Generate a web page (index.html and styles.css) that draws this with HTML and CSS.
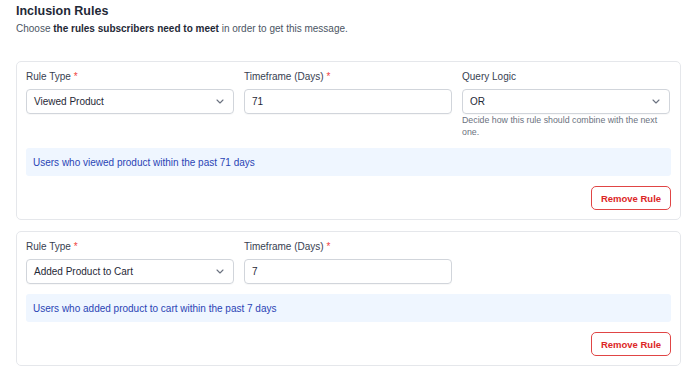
FILE: index.html
```html
<!DOCTYPE html>
<html lang="en">

<head>
  <meta charset="UTF-8">
  <meta name="viewport" content="width=device-width, initial-scale=1.0">
  <title>Inclusion Rules</title>
  <link rel="stylesheet" href="styles.css">
</head>

<body>
  <section class="rules-section">
    <h2 class="rules-title">Inclusion Rules</h2>
    <p class="rules-intro">Choose <strong>the rules subscribers need to meet</strong> in order to get this message.</p>

    <div class="rule-card">
      <div class="rule-fields">
        <div class="field">
          <label class="field-label">Rule Type <span class="req">*</span></label>
          <div class="select-box">
            <span>Viewed Product</span>
            <svg class="chevron" width="8" height="5" viewBox="0 0 8 5"><path d="M1 1l3 3 3-3" fill="none" stroke="#6b7280" stroke-width="1.1" stroke-linecap="round" stroke-linejoin="round"/></svg>
          </div>
        </div>
        <div class="field">
          <label class="field-label">Timeframe (Days) <span class="req">*</span></label>
          <div class="input-box">71</div>
        </div>
        <div class="field">
          <label class="field-label">Query Logic</label>
          <div class="select-box">
            <span>OR</span>
            <svg class="chevron" width="8" height="5" viewBox="0 0 8 5"><path d="M1 1l3 3 3-3" fill="none" stroke="#6b7280" stroke-width="1.1" stroke-linecap="round" stroke-linejoin="round"/></svg>
          </div>
          <p class="field-help">Decide how this rule should combine with the next one.</p>
        </div>
      </div>
      <div class="rule-summary">Users who viewed product within the past 71 days</div>
      <div class="rule-actions">
        <button class="remove-btn" type="button">Remove Rule</button>
      </div>
    </div>

    <div class="rule-card">
      <div class="rule-fields">
        <div class="field">
          <label class="field-label">Rule Type <span class="req">*</span></label>
          <div class="select-box">
            <span>Added Product to Cart</span>
            <svg class="chevron" width="8" height="5" viewBox="0 0 8 5"><path d="M1 1l3 3 3-3" fill="none" stroke="#6b7280" stroke-width="1.1" stroke-linecap="round" stroke-linejoin="round"/></svg>
          </div>
        </div>
        <div class="field">
          <label class="field-label">Timeframe (Days) <span class="req">*</span></label>
          <div class="input-box">7</div>
        </div>
      </div>
      <div class="rule-summary">Users who added product to cart within the past 7 days</div>
      <div class="rule-actions">
        <button class="remove-btn" type="button">Remove Rule</button>
      </div>
    </div>
  </section>
</body>

</html>
```

FILE: styles.css
```css
body {
  margin: 0;
  font-family: "Liberation Sans", Arial, sans-serif;
  color: #374151;
  background: #ffffff;
}

.rules-section {
  padding: 4px 7px 0 16px;
}

.rules-title {
  margin: 0;
  font-size: 12.5px;
  line-height: 15px;
  font-weight: 700;
  color: #1f2937;
}

.rules-intro {
  margin: 3px 0 0;
  font-size: 10px;
  line-height: 14px;
  color: #4b5563;
}

.rules-intro strong {
  color: #1f2937;
}

/* one rule block */
.rule-card {
  margin-top: 11px;
  padding: 8px 9px 9px 9px;
  border: 1px solid #e5e7eb;
  border-radius: 5px;
}

.rules-intro + .rule-card {
  margin-top: 25px;
}

.rule-fields {
  display: grid;
  grid-template-columns: 208px 208px 208px;
  column-gap: 10px;
  align-items: start;
}

.field-label {
  display: block;
  font-size: 10px;
  line-height: 14px;
  margin-bottom: 5px;
  color: #374151;
}

.req {
  color: #ef4444;
}

.select-box,
.input-box {
  box-sizing: border-box;
  height: 25px;
  border: 1px solid #d1d5db;
  border-radius: 4px;
  padding: 0 9px 0 7px;
  font-size: 10px;
  color: #1f2937;
  display: flex;
  align-items: center;
  box-shadow: 0 1px 1px rgba(0, 0, 0, 0.03);
}

.select-box {
  justify-content: space-between;
}

.field-help {
  margin: 0;
  font-size: 8.8px;
  line-height: 12px;
  color: #6b7280;
}

.rule-summary {
  margin-top: 10px;
  height: 28px;
  display: flex;
  align-items: center;
  padding: 0 7px;
  background: #eff6ff;
  border-radius: 3px;
  font-size: 10px;
  color: #2a44b5;
}

.rule-actions {
  display: flex;
  justify-content: flex-end;
  margin-top: 10px;
}

.remove-btn {
  box-sizing: border-box;
  width: 80px;
  height: 24px;
  border: 1.5px solid #e04545;
  border-radius: 5px;
  background: #ffffff;
  font-family: inherit;
  font-size: 9.5px;
  font-weight: 700;
  color: #dc2626;
  padding: 0;
}
```
